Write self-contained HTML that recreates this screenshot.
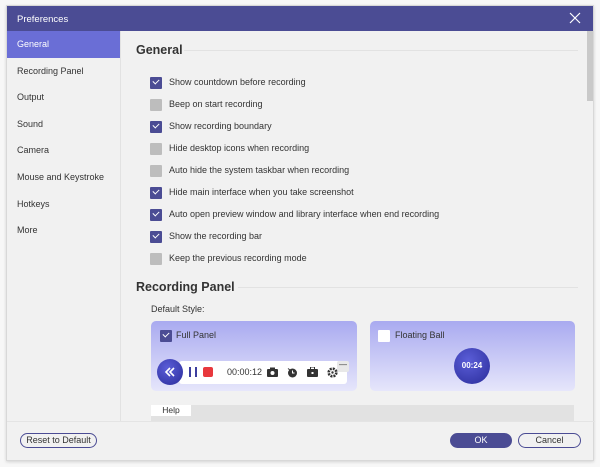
<!DOCTYPE html><html><head><style>
*{margin:0;padding:0;box-sizing:border-box}
body{width:600px;height:467px;background:#f7f7f7;font-family:"Liberation Sans",Tahoma,sans-serif;font-size:9px;color:#333;position:relative;overflow:hidden}
.win{position:absolute;left:6px;top:5px;width:588px;height:456px;background:#f1f1f1;border:1px solid #d8d8d8;box-shadow:0 1px 3px rgba(0,0,0,.15)}
.title{position:absolute;left:0;top:0;width:100%;height:25px;background:#4b4c94;color:#fff;font-size:9.5px;padding:8px 0 0 10px}
.x{position:absolute;right:12px;top:6px;width:12px;height:12px}
.side{position:absolute;left:0;top:25px;width:114px;height:390px;border-right:1px solid #e2e2e2}
.side div{height:26.6px;line-height:26.6px;padding-left:10px;font-size:9px;color:#333}
.side .sel{background:#6a6ed6;color:#fff}
.abs{position:absolute}
.h{font-weight:bold;font-size:12.5px;color:#333}
.line{position:absolute;height:1px;background:#e2e2e2}
.cb{position:absolute;left:143px;width:12px;height:12px;border-radius:1px;background:#bdbdbd}
.cb.on{background:#4b4c94}
.cb.on:after{content:"";position:absolute;left:3px;top:2px;width:5px;height:3px;border-left:1.6px solid #fff;border-bottom:1.6px solid #fff;transform:rotate(-45deg)}
.lab{position:absolute;left:162px;font-size:9px;color:#333}
.card{position:absolute;top:315px;height:70px;border-radius:5px;background:linear-gradient(#a9aaf0,#e6e6fb)}
.btn{position:absolute;top:427px;height:15px;border-radius:8px;font-size:9px;text-align:center;line-height:13px}
</style></head><body>
<div class="win">
<div class="title">Preferences
<svg class="x" viewBox="0 0 12 12"><path d="M1 1L11 11M11 1L1 11" stroke="#fff" stroke-width="1.2"/></svg></div>
<div class="side">
<div class="sel">General</div><div>Recording Panel</div><div>Output</div><div>Sound</div><div>Camera</div><div>Mouse and Keystroke</div><div>Hotkeys</div><div>More</div>
</div>
<div class="abs" style="left:580px;top:25px;width:6px;height:70px;background:#c9c9c9"></div>
<div class="abs h" style="left:129px;top:37px">General</div>
<div class="line" style="left:177px;top:44px;width:394px"></div>
<div class="cb on" style="top:71px"></div><div class="lab" style="top:71px">Show countdown before recording</div>
<div class="cb" style="top:93px"></div><div class="lab" style="top:93px">Beep on start recording</div>
<div class="cb on" style="top:115px"></div><div class="lab" style="top:115px">Show recording boundary</div>
<div class="cb" style="top:137px"></div><div class="lab" style="top:137px">Hide desktop icons when recording</div>
<div class="cb" style="top:159px"></div><div class="lab" style="top:159px">Auto hide the system taskbar when recording</div>
<div class="cb on" style="top:181px"></div><div class="lab" style="top:181px">Hide main interface when you take screenshot</div>
<div class="cb on" style="top:203px"></div><div class="lab" style="top:203px">Auto open preview window and library interface when end recording</div>
<div class="cb on" style="top:225px"></div><div class="lab" style="top:225px">Show the recording bar</div>
<div class="cb" style="top:247px"></div><div class="lab" style="top:247px">Keep the previous recording mode</div>
<div class="abs h" style="left:129px;top:274px">Recording Panel</div>
<div class="line" style="left:231px;top:281px;width:340px"></div>
<div class="lab" style="left:144px;top:298px">Default Style:</div>
<div class="card" style="left:144px;width:206px">
<div class="cb on" style="left:9px;top:9px"></div><div class="lab" style="left:25px;top:9px">Full Panel</div>
<div class="abs" style="left:28px;top:40px;width:168px;height:23px;background:#fff;border-radius:3px"></div>
<div class="abs" style="left:186px;top:40px;width:12px;height:11px;background:#e8e8e8;border-radius:2px;font-size:8px;text-align:center;line-height:8px">—</div>
<div class="abs" style="left:6px;top:38px;width:26px;height:26px;border-radius:50%;background:radial-gradient(circle at 40% 35%,#5b5ed8,#2a2c9a)"></div>
<svg class="abs" style="left:12px;top:44px" width="14" height="14" viewBox="0 0 14 14"><path d="M7 3L3 7L7 11M11 3L7 7L11 11" stroke="#fff" stroke-width="1.6" fill="none"/></svg>
<div class="abs" style="left:38px;top:46px;width:2px;height:10px;background:#3c3e9e"></div>
<div class="abs" style="left:44px;top:46px;width:2px;height:10px;background:#3c3e9e"></div>
<div class="abs" style="left:52px;top:46px;width:10px;height:10px;background:#e8383d;border-radius:2px"></div>
<div class="abs" style="left:76px;top:46px;font-size:9px;color:#333">00:00:12</div>
<svg class="abs" style="left:116px;top:46px" width="11" height="10" viewBox="0 0 11 10"><rect x="0" y="2" width="11" height="8" rx="1" fill="#333"/><rect x="3" y="0.5" width="5" height="2" fill="#333"/><circle cx="5.5" cy="6" r="2" fill="#fff"/></svg>
<svg class="abs" style="left:136px;top:46px" width="11" height="11" viewBox="0 0 11 11"><circle cx="5.5" cy="6" r="4.5" fill="#333"/><path d="M5.5 3.5V6H7.5" stroke="#fff" stroke-width="1" fill="none"/><path d="M1 1.5L3 3" stroke="#333"/></svg>
<svg class="abs" style="left:156px;top:46px" width="11" height="10" viewBox="0 0 11 10"><rect x="0" y="2" width="11" height="8" rx="1" fill="#333"/><rect x="3.5" y="0" width="4" height="3" fill="none" stroke="#333"/><rect x="4.5" y="5" width="2" height="2" fill="#fff"/></svg>
<svg class="abs" style="left:176px;top:46px" width="11" height="11" viewBox="0 0 11 11"><circle cx="5.5" cy="5.5" r="3.8" fill="none" stroke="#333" stroke-width="2.6" stroke-dasharray="2 1"/><circle cx="5.5" cy="5.5" r="1.2" fill="#333"/></svg>
</div>
<div class="card" style="left:363px;width:205px">
<div class="cb" style="left:8px;top:9px;background:#fff"></div><div class="lab" style="left:25px;top:9px">Floating Ball</div>
<div class="abs" style="left:84px;top:27px;width:36px;height:36px;border-radius:50%;background:radial-gradient(circle at 40% 35%,#5b5ed8,#2a2c9a);color:#fff;font-weight:bold;font-size:8px;text-align:center;line-height:36px">00:24</div>
</div>
<div class="abs" style="left:144px;top:399px;width:423px;height:16px;background:#e2e2e2"></div>
<div class="abs" style="left:144px;top:399px;width:40px;height:11px;background:#fff;text-align:center;font-size:8.5px;line-height:11px">Help</div>
<div class="line" style="left:0;top:415px;width:588px;background:#e4e4e4"></div>
<div class="btn" style="left:13px;width:77px;border:1.5px solid #4b4c94;color:#333">Reset to Default</div>
<div class="btn" style="left:443px;width:62px;background:#4b4c94;color:#fff;line-height:15px">OK</div>
<div class="btn" style="left:511px;width:63px;border:1.5px solid #4b4c94;color:#333">Cancel</div>
</div>
</body></html>
